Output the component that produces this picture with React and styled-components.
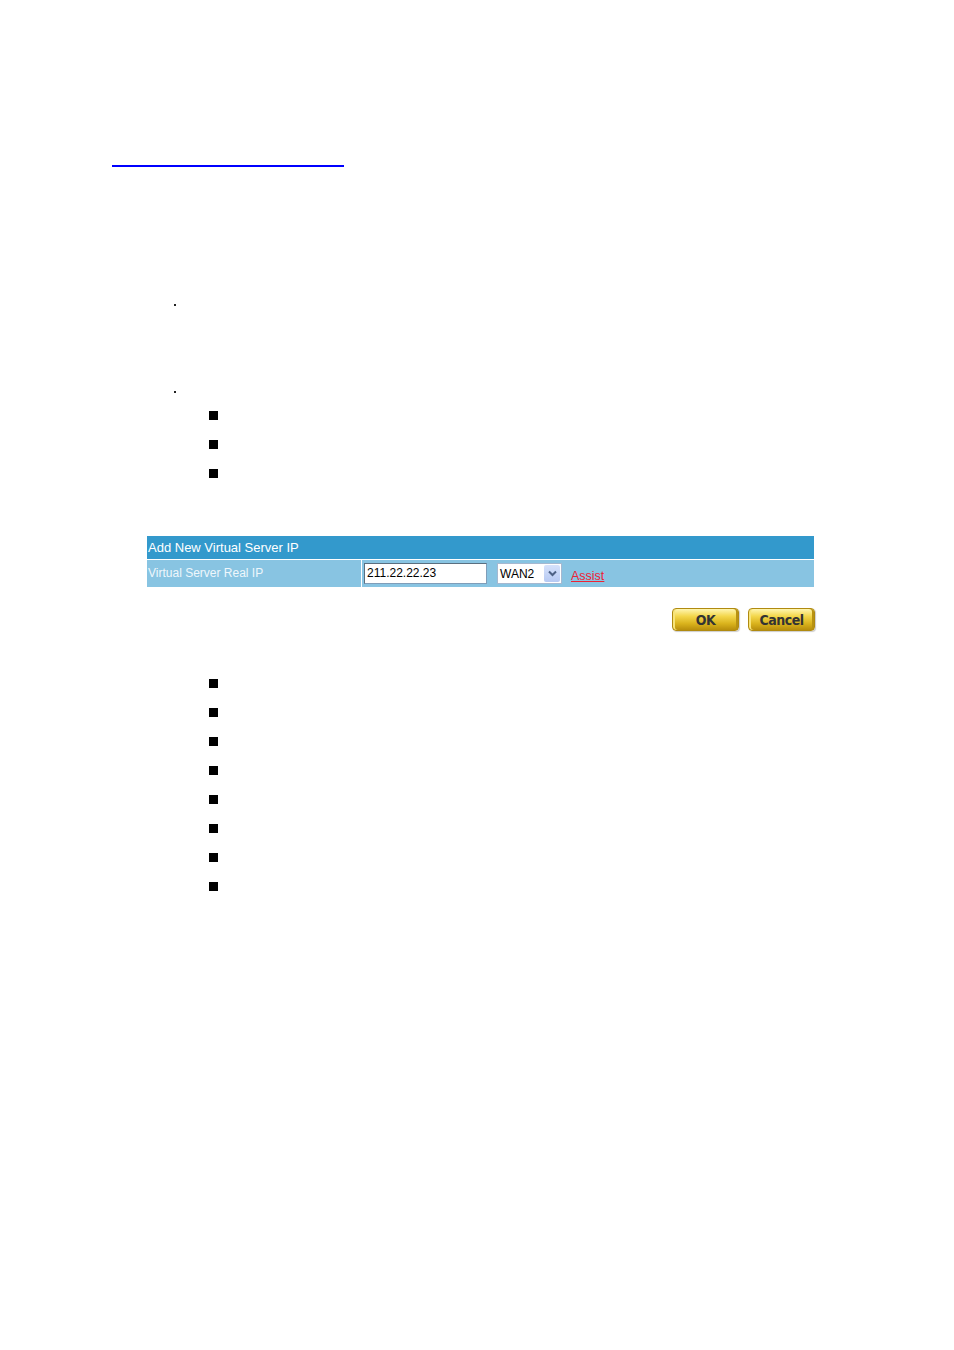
import React from "react";
import styled, { createGlobalStyle } from "styled-components";

const Global = createGlobalStyle`
  html, body { margin: 0; padding: 0; background: #ffffff; }
  body { font-family: "Liberation Sans", Arial, sans-serif; }
`;

const Page = styled.div`
  width: 954px;
  height: 1350px;
  display: flex;
  flex-direction: column;
  padding-top: 165px;
  box-sizing: border-box;
`;

const BlankLink = styled.a`
  display: block;
  margin-left: 112px;
  width: 232px;
  height: 0;
  border-bottom: 2px solid #0000ff;
`;

const Dot = styled.div`
  width: 2px;
  height: 2px;
  background: #222;
  margin-left: 174px;
  margin-top: ${(p) => p.$top}px;
`;

const SquareList = styled.ul`
  list-style: none;
  margin: ${(p) => p.$top}px 0 0 209px;
  padding: 0;
  display: flex;
  flex-direction: column;
  gap: 20px;
`;

const Square = styled.li`
  width: 9px;
  height: 9px;
  background: #000;
`;

const Table = styled.div`
  margin: 58px 0 0 147px;
  width: 667px;
  display: flex;
  flex-direction: column;
  gap: 1px;
`;

const Header = styled.div`
  height: 23px;
  background: #3399cc;
  color: #ffffff;
  font-size: 13px;
  line-height: 23px;
  padding-left: 1px;
`;

const Row = styled.div`
  height: 27px;
  display: flex;
  gap: 1px;
`;

const LabelCell = styled.div`
  width: 213px;
  background: #88c4e2;
  color: #eef7fc;
  font-size: 12px;
  line-height: 27px;
  padding-left: 1px;
`;

const ValueCell = styled.div`
  flex: 1;
  background: #88c4e2;
  display: flex;
  align-items: center;
  padding-left: 2px;
`;

const TextInput = styled.div`
  width: 119px;
  height: 19px;
  background: #fff;
  border: 1px solid #7f9db9;
  border-top-color: #5a6f80;
  border-left-color: #5a6f80;
  font-size: 12px;
  line-height: 19px;
  padding-left: 2px;
  color: #000;
`;

const Select = styled.div`
  margin-left: 10px;
  width: 61px;
  height: 19px;
  background: #fff;
  border: 1px solid #a5b8d0;
  display: flex;
  align-items: center;
  justify-content: space-between;
  font-size: 12px;
  color: #000;
  padding-left: 2px;
`;

const SelectArrow = styled.div`
  width: 16px;
  height: 17px;
  margin-right: 1px;
  background: linear-gradient(#d6e2fb, #b6c9f3);
  border-radius: 2px;
  display: flex;
  align-items: center;
  justify-content: center;
`;

const Assist = styled.a`
  margin-left: 9px;
  margin-top: 5px;
  color: #ee2233;
  font-size: 12.5px;
  text-decoration: underline;
`;

const Buttons = styled.div`
  margin: 21px 0 0 672px;
  display: flex;
  gap: 9px;
`;

const GoldButton = styled.button`
  width: 67px;
  height: 23px;
  border: 1px solid #b08a10;
  border-radius: 4px;
  background: linear-gradient(#fff6b0 0%, #f3d64a 35%, #d9b21c 70%, #b88e0c 100%);
  box-shadow: inset 2px 0 0 #f7e47a, inset -2px 0 0 #b89212, 1px 1px 1px #ccc;
  font-family: "DejaVu Sans Condensed", "DejaVu Sans", sans-serif;
  font-weight: bold;
  font-size: 14px;
  color: #333;
  padding: 0;
  letter-spacing: -0.5px;
`;

export default function App() {
  return (
    <>
      <Global />
      <Page>
        <BlankLink href="#" aria-label="link" />
        <Dot $top={137} />
        <Dot $top={85} />
        <SquareList $top={18}>
          <Square />
          <Square />
          <Square />
        </SquareList>
        <Table>
          <Header>Add New Virtual Server IP</Header>
          <Row>
            <LabelCell>Virtual Server Real IP</LabelCell>
            <ValueCell>
              <TextInput>211.22.22.23</TextInput>
              <Select>
                WAN2
                <SelectArrow>
                  <svg width="9" height="7" viewBox="0 0 9 7">
                    <path d="M1 1.5 L4.5 5 L8 1.5" fill="none" stroke="#4d6185" strokeWidth="2" />
                  </svg>
                </SelectArrow>
              </Select>
              <Assist href="#">Assist</Assist>
            </ValueCell>
          </Row>
        </Table>
        <Buttons>
          <GoldButton>OK</GoldButton>
          <GoldButton>Cancel</GoldButton>
        </Buttons>
        <SquareList $top={48}>
          <Square />
          <Square />
          <Square />
          <Square />
          <Square />
          <Square />
          <Square />
          <Square />
        </SquareList>
      </Page>
    </>
  );
}
